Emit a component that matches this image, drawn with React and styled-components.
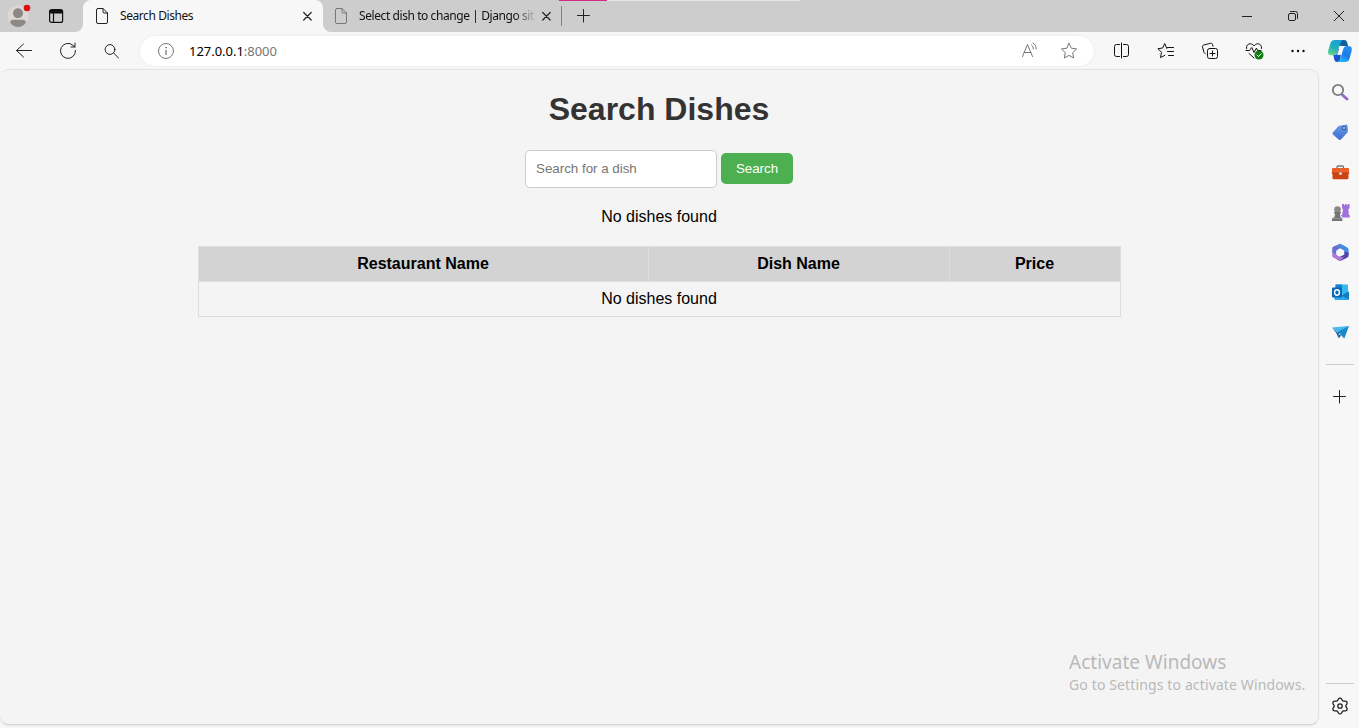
import React from 'react';
import styled, { createGlobalStyle } from 'styled-components';

const Global = createGlobalStyle`
  * { box-sizing: border-box; }
  body { margin: 0; overflow: hidden; background: #f7f7f7; font-family: "Noto Sans", "Open Sans", sans-serif; }
`;

const Browser = styled.div`
  width: 1359px;
  height: 728px;
  display: flex;
  flex-direction: column;
  background: #f7f7f7;
`;

const TitleBar = styled.header`
  position: relative;
  display: flex;
  height: 32px;
  flex: none;
`;
const ProfileArea = styled.div`
  width: 83px;
  display: flex;
  align-items: center;
  gap: 17px;
  padding-left: 7px;
  background: #cdcdcd;
  border-radius: 0 0 8px 0;
`;
const ActiveSlot = styled.div`
  width: 240px;
  background: linear-gradient(#cdcdcd 50%, #f7f7f7 50%);
`;
const ActiveTab = styled.div`
  height: 32px;
  display: flex;
  align-items: center;
  padding: 0 10px 0 11px;
  background: #f7f7f7;
  border-radius: 8px 8px 0 0;
`;
const TabStrip = styled.div`
  flex: 1;
  display: flex;
  align-items: center;
  padding-left: 10px;
  background: #cdcdcd;
  border-radius: 0 0 0 8px;
`;
const TabTitle = styled.span`
  width: ${(p) => p.$w}px;
  margin-left: 10px;
  font-size: 12px;
  line-height: 16px;
  letter-spacing: ${(p) => p.$track}px;
  white-space: nowrap;
  color: #111;
  ${(p) => p.$fade && 'mask-image: linear-gradient(90deg, #000 86%, transparent 98%);'}
`;
const TabDivider = styled.i`
  width: 1px;
  height: 20px;
  margin: 0 13px 0 9px;
  background: #808080;
`;
const WindowButtons = styled.div`
  display: flex;
  gap: 30px;
  margin-left: auto;
  padding-right: 12px;
`;
const LoadingLine = styled.i`
  position: absolute;
  top: 0;
  left: 559px;
  width: 48px;
  height: 1px;
  background: #d02b85;
`;
const LoadingTrack = styled(LoadingLine)`
  left: 607px;
  width: 193px;
  background: #e6e6e6;
`;

const Body = styled.div`
  flex: 1;
  display: flex;
`;
const MainColumn = styled.div`
  width: 1319px;
  display: flex;
  flex-direction: column;
`;
const Toolbar = styled.nav`
  height: 37px;
  display: flex;
  align-items: center;
  padding: 1px 0 0 14px;
`;
const NavButtons = styled.div`
  display: flex;
  gap: 24px;
`;
const AddressBar = styled.div`
  width: 954px;
  height: 30px;
  margin-left: 18px;
  padding: 0 15px 0 16px;
  display: flex;
  align-items: center;
  background: #fff;
  border-radius: 15px;
  box-shadow: 0 0 2px rgba(0, 0, 0, 0.09);
`;
const Url = styled.span`
  flex: 1;
  margin-left: 13px;
  font-size: 13px;
  line-height: 20px;
  letter-spacing: -0.03px;
  color: #000;
`;
const Port = styled.span`
  color: #767676;
`;
const AddressActions = styled.div`
  display: flex;
  gap: 20px;
`;
const ToolActions = styled.div`
  display: flex;
  gap: 24px;
  margin-left: 18px;
`;

const Page = styled.main`
  position: relative;
  height: 656px;
  padding: 21px 0 0;
  display: flex;
  flex-direction: column;
  align-items: center;
  background: #f4f4f4;
  border: 1px solid #e3e3e3;
  border-left: 0;
  border-bottom-color: #d4d4d4;
  border-radius: 9px;
  box-shadow: 0 1px 2px rgba(0, 0, 0, 0.08);
  font-family: "Liberation Sans", Arial, sans-serif;
  color: #000;
`;
const Heading = styled.h1`
  margin: 0;
  font-size: 32px;
  line-height: 37px;
  color: #333;
`;
const SearchForm = styled.form`
  display: flex;
  align-items: center;
  gap: 4px;
  margin-top: 22px;
`;
const SearchInput = styled.input`
  width: 192px;
  height: 38px;
  padding: 9px 10px 11px;
  border: 1px solid #ccc;
  border-radius: 5px;
  background: #fff;
  font: 13.333px "Liberation Sans", Arial, sans-serif;
  &::placeholder { color: #757575; }
`;
const SearchButton = styled.button`
  width: 72px;
  height: 31px;
  margin-bottom: 1px;
  padding: 0;
  border: 0;
  border-radius: 5px;
  background: #4caf50;
  color: #fff;
  font: 13.333px "Liberation Sans", Arial, sans-serif;
`;
const Message = styled.p`
  margin: 19px 0 20px;
  font-size: 16px;
  line-height: 19px;
`;
const DishTable = styled.table`
  width: 922px;
  table-layout: fixed;
  border-collapse: collapse;
  font-size: 16px;
  line-height: 18px;
`;
const HeadCell = styled.th`
  width: ${(p) => p.$w}px;
  padding: 8px;
  border: 1px solid #ddd;
  background: #d3d3d3;
`;
const Cell = styled.td`
  padding: 8px;
  border: 1px solid #ddd;
  text-align: center;
`;
const Watermark = styled.aside`
  position: absolute;
  left: 1069px;
  top: 579px;
  font-family: "Noto Sans", "Open Sans", sans-serif;
  color: #b9b9b9;
  white-space: nowrap;
`;
const WatermarkTitle = styled.div`
  font-size: 19px;
  line-height: 26px;
  letter-spacing: 0.02px;
`;
const WatermarkText = styled.div`
  font-size: 14px;
  line-height: 20px;
  letter-spacing: 0.13px;
`;

const Sidebar = styled.aside`
  width: 40px;
  display: flex;
  flex-direction: column;
  align-items: center;
  padding: 6px 0 12px 2px;
`;
const AppList = styled.div`
  display: flex;
  flex-direction: column;
  gap: 20px;
  margin-top: 18px;
`;
const Rule = styled.i`
  width: 28px;
  height: 1px;
  margin: ${(p) => p.$m};
  background: #cbcbcb;
`;
const Svg = styled.svg`
  display: block;
  flex: none;
  overflow: visible;
`;

const Icon = ({ size = 20, color = '#222', stroke = 1, children }) => (
  <Svg width={size} height={size} viewBox={`0 0 ${size} ${size}`} fill="none" stroke={color}
    strokeWidth={stroke} strokeLinecap="round" strokeLinejoin="round">{children}</Svg>
);

const Avatar = () => (
  <Icon size={24} stroke={0}>
    <circle cx="11" cy="12" r="10.5" fill="#dcd9d5" />
    <circle cx="11" cy="9.3" r="5" fill="#8c8985" />
    <path d="M3.2 18.5c0-2 1.500-2.800 3-2.800h9.600c1.500 0 3 .8 3 2.800-1.600 2.800-4.600 4.500-7.800 4.500s-6.200-1.700-7.800-4.500z" fill="#8c8985" />
    <circle cx="20" cy="4" r="3.300" fill="#e50914" />
  </Icon>
);
const TabActions = () => (
  <Icon size={16} stroke={1.200} color="#111">
    <rect x="1.600" y="1.600" width="13" height="12.800" rx="2" />
    <path d="M2 2.500h12.200v2.500H2z" fill="#111" /><path d="M5.500 5.500v8.500" />
  </Icon>
);
const FileIcon = ({ color }) => (
  <Icon size={16} color={color}>
    <path d="M4 .5h5l4.500 4.500v9a1.500 1.500 0 0 1-1.500 1.500H4A1.500 1.500 0 0 1 2.500 14V2A1.500 1.500 0 0 1 4 .5zM9 .5V4a1 1 0 0 0 1 1h3.500" />
  </Icon>
);
const CloseTab = () => <Icon size={12} stroke={1.200}><path d="M2.700 2.500l7.500 7.500M10.200 2.500L2.700 10" /></Icon>;
const Plus = ({ x = 8.5 }) => <Icon size={16}><path d={`M${x} 1.500v12.500M${x - 6} 7.500h12`} /></Icon>;

const CopilotIcon = () => (
  <Svg width="26" height="26" viewBox="0 0 26 26">
    <defs>
      <linearGradient id="cpA" x1="0.600" y1="0" x2="0.200" y2="1"><stop stopColor="#1a9fdd" /><stop offset=".5" stopColor="#20b0b8" /><stop offset="1" stopColor="#6ad68c" /></linearGradient>
      <linearGradient id="cpB" x1="0.700" y1="0" x2="0.200" y2="1"><stop stopColor="#2a8ff0" /><stop offset=".5" stopColor="#1b7bea" /><stop offset="1" stopColor="#21c2fa" /></linearGradient>
    </defs>
    <path d="M12.500 2H17c2.200 0 2.700 1 3.200 2.800l.9 3.200h-5L12 8z" fill="#126198" />
    <path d="M8 2h8.500c-2 .4-2.800 2-3.400 4L10 14.500c-.8 2-1.800 2.700-4 2.700H4c-2.700 0-3.500-2-2.800-4.500L3.500 5C4.200 3 5.500 2 8 2z" fill="url(#cpA)" />
    <path d="M6 17.200c2.800 0 3.700-1.100 4.300-3.200l1.200-3.500 2.600 1.500-.5 8c-.4 2.500-1.300 4-3.300 4-2.300 0-2.800-1.500-3.200-3.300C6.800 19.200 6.800 17.800 6 17.200z" fill="#1555ce" />
    <path d="M18 24h-8c2.200-.2 3-1.800 3.600-4L16 12c.7-2.500 1.700-4 4-4h2c2.500 0 3.400 2.200 2.700 4.700l-2.200 8C21.800 23 20.500 24 18 24z" fill="url(#cpB)" />
    <path d="M12.600 9.300c.5-1.200 1.200-1.600 2.200-1.400l2.200.5c-.8.700-1.200 1.900-1.600 3.300l-1.400 4.200c-.4 1-1.300 1.300-2.200 1.100l-2.200-.4c.8-.6 1.100-1.500 1.500-2.800z" fill="#f4fafa" />
  </Svg>
);
const SearchApp = () => (
  <Icon><path d="M12.500 13l4.500 4" stroke="#9968cf" strokeWidth="3" /><circle cx="8" cy="8" r="5.200" stroke="#7b7b7b" strokeWidth="1.800" fill="#f7f7f7" /></Icon>
);
const ShoppingApp = () => (
  <Icon stroke={0}>
    <defs><linearGradient id="tag" x1="0" y1="0" x2="0" y2="1"><stop stopColor="#6c9df0" /><stop offset="1" stopColor="#3f6ccb" /></linearGradient></defs>
    <g transform="translate(0 .6)">
      <path d="M9.500 3.100L16 2c1-.1 1.600.5 1.600 1.400l.3 5c0 .7-.2 1.200-.7 1.700l-6 6.600c-.8.900-1.600 1-2.500.2l-5.500-4.800c-1-.9-1-1.600-.2-2.500l5.100-5.700c.4-.4.8-.7 1.400-.8z" fill="url(#tag)" />
      <circle cx="14" cy="5.500" r="2" fill="#294776" /><circle cx="14" cy="5.500" r="1" fill="#dcecff" />
    </g>
  </Icon>
);
const ToolsApp = () => (
  <Icon stroke={0}>
    <g transform="translate(0 .5)">
      <path d="M7 6V4.500a1 1 0 0 1 1-1h4.500a1 1 0 0 1 1 1V6" fill="none" stroke="#777" strokeWidth="1.300" />
      <rect x="2" y="5.500" width="17" height="6" rx="1" fill="#e86028" /><path d="M2.500 10.500h16v5c0 .8-.4 1.200-1.200 1.200H3.700c-.8 0-1.200-.4-1.200-1.200z" fill="#cc4212" />
      <path d="M2 10.500h17" stroke="#b23709" strokeWidth=".7" /><circle cx="10.500" cy="11" r="1.600" fill="#cbd2d4" />
    </g>
  </Icon>
);
const GamesApp = () => (
  <Icon stroke={0}>
    <g transform="translate(0 .5)">
      <path d="M12 1.500h2v1.200h1V1.500h1.800v1.200h1V1.500h1.700v4L18.300 7l.6 5.500h.8v2.500h-7l-2-2.500h1.500l.7-5.500-.9-1.500z" fill="#a071dc" />
      <circle cx="7.500" cy="7" r="3.300" fill="#888" /><path d="M4 9.500h7v1.500H9.800l.7 3.500 1.800 1.500v2.500H2V16l2.500-1.500.7-3.500H4z" fill="#737373" /><path d="M2 16h10.300" stroke="#aaa" strokeWidth=".6" />
    </g>
  </Icon>
);
const OfficeApp = () => (
  <Icon stroke={0}>
    <path d="M10 1.700l6.500 3.600L18.500 9 14 8.500l-4-2.300-3.800 2.600v4.500L2.200 11V6.700C2.200 5.500 2.700 5 3.600 4.500z" fill="#6575cf" />
    <path d="M10 1.700l6.600 3.500c1.400.8 2 1.500 2 3V13l-4.300-2.400V7.800L8.200 3.500z" fill="#3c8ee6" />
    <path d="M18.600 10.500v3c0 1.100-.6 1.700-1.600 2.200l-5 2.600c-1.300.7-2.500.6-3.700 0l-2.500-1.500 8.500-4.200V9.500z" fill="#5546aa" />
    <path d="M2.200 11l4 1.700 4.100 2.300 3.700.6-3 2.500c-.9.6-1.900.5-2.700 0l-4.600-2.400c-1-.5-1.500-1.200-1.500-2.200z" fill="#b078d5" />
    <path d="M10.300 6.700l3.500 2v3.600l-3.500 2-3.500-2V8.700z" fill="#f7f7f7" />
  </Icon>
);
const OutlookApp = () => (
  <Icon stroke={0}>
    <g transform="translate(0 .5)">
      <rect x="5.500" y="2" width="12.500" height="10" rx="1" fill="#35b8ef" /><path d="M5.500 2H12v4H5.500z" fill="#1683cd" />
      <path d="M4.500 9l7 4 7.500-4v7.500c0 .6-.4 1-1 1H5.500c-.6 0-1-.4-1-1z" fill="#28a8ea" /><path d="M11 13l8-4v8z" fill="#147dc0" />
      <rect x="2" y="5" width="10" height="10" rx="1" fill="#0968b8" /><ellipse cx="7" cy="10" rx="2.400" ry="2.700" fill="none" stroke="#fff" strokeWidth="1.400" />
    </g>
  </Icon>
);
const DropApp = () => (
  <Icon stroke={0}>
    <path d="M2 5.500L19 4l-7.500 7-4-1z" fill="#45b9ed" /><path d="M19 4l-4.700 12.500-4.800-4.800z" fill="#168acd" />
    <path d="M2 5.500l5.600 5L19 4 8.500 12v4.300L6.300 11z" fill="#0a68a8" /><path d="M8.500 12l2.500 1.700-2.500 2.600z" fill="#0c4c82" />
  </Icon>
);

const gear = Array.from({ length: 60 }, (_, i) => {
  const a = (i / 60) * Math.PI * 2;
  const r = 6.900 + 1.100 * Math.cos(6 * a);
  return `${i ? 'L' : 'M'}${(10 + r * Math.sin(a)).toFixed(2)} ${(10 - r * Math.cos(a)).toFixed(2)}`;
}).join('') + 'Z';

const columns = [{ label: 'Restaurant Name', w: 450 }, { label: 'Dish Name', w: 301 }, { label: 'Price', w: 171 }];

export default function App() {
  return (
    <Browser>
      <Global />
      <TitleBar>
        <ProfileArea><Avatar /><TabActions /></ProfileArea>
        <ActiveSlot>
          <ActiveTab>
            <FileIcon color="#222" />
            <TabTitle $w={181} $track={-0.42}>Search Dishes</TabTitle>
            <CloseTab />
          </ActiveTab>
        </ActiveSlot>
        <TabStrip>
          <FileIcon color="#777" />
          <TabTitle $w={181} $track={-0.42} $fade>Select dish to change | Django sit</TabTitle>
          <CloseTab />
          <TabDivider />
          <Plus />
          <WindowButtons>
            <Icon size={16}><path d="M3 8.500h10" strokeLinecap="butt" /></Icon>
            <Icon size={16}><rect x="3.500" y="5.500" width="7" height="7" rx="1.500" /><path d="M5.500 3.500h5a2 2 0 0 1 2 2v5" /></Icon>
            <Icon size={16}><path d="M3.200 3.200l9.600 9.600M12.800 3.200l-9.600 9.600" /></Icon>
          </WindowButtons>
        </TabStrip>
        <LoadingLine /><LoadingTrack />
      </TitleBar>
      <Body>
        <MainColumn>
          <Toolbar>
            <NavButtons>
              <Icon><path d="M17.500 9.500h-15M9.500 3l-7 6.500 7 6.500" /></Icon>
              <Icon><path d="M17.500 9.500A7.500 7.500 0 1 1 15 4.300l2 1.700M17 2v4h-4" /></Icon>
              <Icon><circle cx="8" cy="8.500" r="4.900" /><path d="M11.600 12l5 5" /></Icon>
            </NavButtons>
            <AddressBar>
              <Icon color="#777"><circle cx="10" cy="10" r="7.500" /><path d="M10 9.500v4" strokeWidth="1.300" /><circle cx="10" cy="6.700" r=".4" /></Icon>
              <Url>127.0.0.1<Port>:8000</Port></Url>
              <AddressActions>
                <Icon color="#777"><path d="M3.500 15.500l5-12 5 12M5.200 11.500h6.600M12.500 4c1.300 1 1.800 2.300 1.800 4M14 2c2.300 1.300 3.200 3.500 3.200 6" /></Icon>
                <Icon color="#777"><path d="M10 2.300l2.300 4.900 5.300.7-3.900 3.700 1 5.400-4.700-2.600L5.300 17l1-5.400-3.900-3.700 5.300-.7z" /></Icon>
              </AddressActions>
            </AddressBar>
            <ToolActions>
              <Icon color="#111"><path d="M7.500 3.500H4.500a2 2 0 0 0-2 2v8a2 2 0 0 0 2 2h3M11.500 3.500h3a2 2 0 0 1 2 2v8a2 2 0 0 1-2 2h-3M9.500 2v15" /></Icon>
              <Icon color="#111"><path d="M10.800 7.500L8.700 2.500 6.700 7 2 7.700l3.500 3.600-1 5.300 4.300-2.300M11.500 6.500h6M11.500 10.500h6M12.500 14.500h5" /></Icon>
              <Icon color="#111"><rect x="7.500" y="7.500" width="10" height="10" rx="2" /><path d="M12.500 10v5M10 12.500h5M5.500 13L4 11.500 2.500 6c-.3-1 .2-1.700 1.200-2l6.800-1.700c1-.3 1.700 0 2 1l.5 2" /></Icon>
              <Icon color="#111"><path d="M2.500 7.500C2 4.500 4 2.800 6.200 2.800c1.600 0 2.800.8 3.800 2.200 1-1.400 2.200-2.200 3.800-2.200 2.200 0 4.200 1.700 3.700 4.700M2 9.500h3.500l2.300-3 2.200 5 2.500-4.500 1 2.500H17M5 12.500l5 4.500" /><circle cx="15" cy="14" r="4.500" fill="#107c10" stroke="none" /><path d="M13 14l1.500 1.500 2.700-2.700" stroke="#fff" /></Icon>
              <Icon color="#111"><g fill="#111" stroke="none"><circle cx="4.500" cy="10" r="1.200" /><circle cx="10" cy="10" r="1.200" /><circle cx="15.500" cy="10" r="1.200" /></g></Icon>
            </ToolActions>
          </Toolbar>
          <Page>
            <Heading>Search Dishes</Heading>
            <SearchForm onSubmit={(e) => e.preventDefault()}>
              <SearchInput placeholder="Search for a dish" />
              <SearchButton>Search</SearchButton>
            </SearchForm>
            <Message>No dishes found</Message>
            <DishTable>
              <thead><tr>{columns.map((c) => <HeadCell key={c.label} $w={c.w}>{c.label}</HeadCell>)}</tr></thead>
              <tbody><tr><Cell colSpan={3}>No dishes found</Cell></tr></tbody>
            </DishTable>
            <Watermark>
              <WatermarkTitle>Activate Windows</WatermarkTitle>
              <WatermarkText>Go to Settings to activate Windows.</WatermarkText>
            </Watermark>
          </Page>
        </MainColumn>
        <Sidebar>
          <CopilotIcon />
          <AppList>
            <SearchApp /><ShoppingApp /><ToolsApp /><GamesApp /><OfficeApp /><OutlookApp /><DropApp />
          </AppList>
          <Rule $m="22px 0 24px" />
          <Plus x={7.5} />
          <Rule $m="auto 0 12px" />
          <Icon stroke={1.300}><path d={gear} /><circle cx="10" cy="10" r="2.200" /></Icon>
        </Sidebar>
      </Body>
    </Browser>
  );
}
